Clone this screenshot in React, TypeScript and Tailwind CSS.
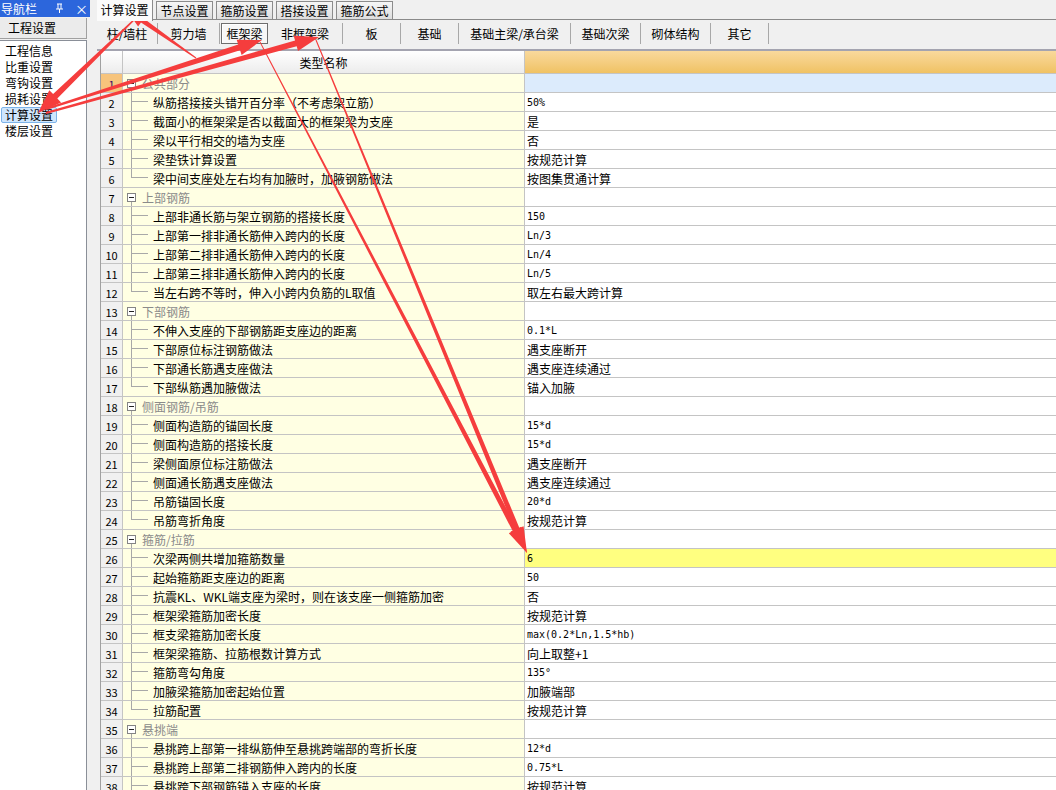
type Row = { name: string; value: string; kind: "g" | "c" | "l" };

const rows: Row[] = [
  { name: "公共部分", value: "", kind: "g" },
  { name: "纵筋搭接接头错开百分率（不考虑架立筋）", value: "50%", kind: "c" },
  { name: "截面小的框架梁是否以截面大的框架梁为支座", value: "是", kind: "c" },
  { name: "梁以平行相交的墙为支座", value: "否", kind: "c" },
  { name: "梁垫铁计算设置", value: "按规范计算", kind: "c" },
  { name: "梁中间支座处左右均有加腋时，加腋钢筋做法", value: "按图集贯通计算", kind: "l" },
  { name: "上部钢筋", value: "", kind: "g" },
  { name: "上部非通长筋与架立钢筋的搭接长度", value: "150", kind: "c" },
  { name: "上部第一排非通长筋伸入跨内的长度", value: "Ln/3", kind: "c" },
  { name: "上部第二排非通长筋伸入跨内的长度", value: "Ln/4", kind: "c" },
  { name: "上部第三排非通长筋伸入跨内的长度", value: "Ln/5", kind: "c" },
  { name: "当左右跨不等时，伸入小跨内负筋的L取值", value: "取左右最大跨计算", kind: "l" },
  { name: "下部钢筋", value: "", kind: "g" },
  { name: "不伸入支座的下部钢筋距支座边的距离", value: "0.1*L", kind: "c" },
  { name: "下部原位标注钢筋做法", value: "遇支座断开", kind: "c" },
  { name: "下部通长筋遇支座做法", value: "遇支座连续通过", kind: "c" },
  { name: "下部纵筋遇加腋做法", value: "锚入加腋", kind: "l" },
  { name: "侧面钢筋/吊筋", value: "", kind: "g" },
  { name: "侧面构造筋的锚固长度", value: "15*d", kind: "c" },
  { name: "侧面构造筋的搭接长度", value: "15*d", kind: "c" },
  { name: "梁侧面原位标注筋做法", value: "遇支座断开", kind: "c" },
  { name: "侧面通长筋遇支座做法", value: "遇支座连续通过", kind: "c" },
  { name: "吊筋锚固长度", value: "20*d", kind: "c" },
  { name: "吊筋弯折角度", value: "按规范计算", kind: "l" },
  { name: "箍筋/拉筋", value: "", kind: "g" },
  { name: "次梁两侧共增加箍筋数量", value: "6", kind: "c" },
  { name: "起始箍筋距支座边的距离", value: "50", kind: "c" },
  { name: "抗震KL、WKL端支座为梁时，则在该支座一侧箍筋加密", value: "否", kind: "c" },
  { name: "框架梁箍筋加密长度", value: "按规范计算", kind: "c" },
  { name: "框支梁箍筋加密长度", value: "max(0.2*Ln,1.5*hb)", kind: "c" },
  { name: "框架梁箍筋、拉筋根数计算方式", value: "向上取整+1", kind: "c" },
  { name: "箍筋弯勾角度", value: "135°", kind: "c" },
  { name: "加腋梁箍筋加密起始位置", value: "加腋端部", kind: "c" },
  { name: "拉筋配置", value: "按规范计算", kind: "l" },
  { name: "悬挑端", value: "", kind: "g" },
  { name: "悬挑跨上部第一排纵筋伸至悬挑跨端部的弯折长度", value: "12*d", kind: "c" },
  { name: "悬挑跨上部第二排钢筋伸入跨内的长度", value: "0.75*L", kind: "c" },
  { name: "悬挑跨下部钢筋锚入支座的长度", value: "按规范计算", kind: "c" },
];

const navItems = ["工程信息", "比重设置", "弯钩设置", "损耗设置", "计算设置", "楼层设置"];
const tabs = ["节点设置", "箍筋设置", "搭接设置", "箍筋公式"];
const subTabs: [string, string][] = [
  ["柱/墙柱", "w-[61px]"],
  ["剪力墙", "w-[62px]"],
  ["框架梁", "w-[48px]"],
  ["非框架梁", "w-[75px]"],
  ["板", "w-[58px]"],
  ["基础", "w-[58px]"],
  ["基础主梁/承台梁", "w-[112px]"],
  ["基础次梁", "w-[70px]"],
  ["砌体结构", "w-[70px]"],
  ["其它", "w-[58px]"],
];

const hasCjk = (s: string) => /[\u4e00-\u9fff]/.test(s);

// tapered arrow: thin at the tail, wide at the head
function arrow(x1: number, y1: number, x2: number, y2: number, w1: number, w2: number, hl: number, hw: number) {
  const dx = x2 - x1;
  const dy = y2 - y1;
  const len = Math.hypot(dx, dy);
  const ux = dx / len;
  const uy = dy / len;
  const nx = -uy;
  const ny = ux;
  const bx = x2 - ux * hl;
  const by = y2 - uy * hl;
  const p = [
    [x1 + (nx * w1) / 2, y1 + (ny * w1) / 2],
    [bx + (nx * w2) / 2, by + (ny * w2) / 2],
    [bx + (nx * hw) / 2, by + (ny * hw) / 2],
    [x2, y2],
    [bx - (nx * hw) / 2, by - (ny * hw) / 2],
    [bx - (nx * w2) / 2, by - (ny * w2) / 2],
    [x1 - (nx * w1) / 2, y1 - (ny * w1) / 2],
  ];
  return p.map((q) => q[0].toFixed(1) + "," + q[1].toFixed(1)).join(" ");
}

const TreeCell = ({ row }: { row: Row }) => {
  if (row.kind === "g") {
    return (
      <div className="flex h-full items-center pl-[4px]">
        <div className="flex h-full w-[9px] flex-col items-center">
          <div className="h-[5px]" />
          <div className="flex h-[9px] w-[9px] items-center justify-center border border-[#848484] bg-white">
            <div className="h-px w-[5px] bg-[#222]" />
          </div>
          <div className="w-px flex-1 bg-[#a8a8a8]" />
        </div>
        <span className="ml-[6px] translate-y-[1px] text-[#8a8a8a]">{row.name}</span>
      </div>
    );
  }
  return (
    <div className="flex h-full items-center pl-[8px]">
      <div className="flex h-full w-[17px] shrink-0 flex-col">
        <div className="h-1/2 border-b border-l border-[#a8a8a8]" />
        <div className={row.kind === "l" ? "h-1/2" : "h-1/2 border-l border-[#a8a8a8]"} />
      </div>
      <span className="translate-y-[1px] whitespace-nowrap pl-[5px] text-black">{row.name}</span>
    </div>
  );
};

export default function App() {
  return (
    <div className="relative flex h-[790px] w-[1056px] overflow-hidden bg-[#f0f0f0] font-['Noto_Sans_CJK_SC',sans-serif] text-[12px] text-black">
      {/* navigation panel */}
      <div className="flex w-[97px] shrink-0 flex-col">
        <div className="flex h-[17px] w-[90px] shrink-0 items-center bg-[#2c66dc] text-white">
          <span className="ml-[1px] leading-none">导航栏</span>
          <svg width="9" height="11" viewBox="0 0 9 11" className="ml-[18px]">
            <path d="M2 1h5M3 1v5M6 1v5M1 6h7M4.5 6v4" stroke="white" strokeWidth="1" fill="none" />
          </svg>
          <span className="ml-[11px] text-[13px] leading-none">×</span>
        </div>
        <div className="mt-[1px] flex h-[21px] w-[87px] shrink-0 items-center border-b border-r border-[#a0a0a0] bg-[#ebebeb] pl-[8px]">
          工程设置
        </div>
        <div className="mt-[1px] flex w-[87px] flex-1 flex-col border-r border-t border-[#8a8f98] bg-white pt-[2px]">
          {navItems.map((t) => (
            <div key={t} className="flex h-[16px] shrink-0 items-center">
              <span
                className={
                  t === "计算设置"
                    ? "ml-[1px] flex h-[16px] w-[56px] items-center rounded-[2px] border border-[#7db3e8] bg-[#cfe6fd] pl-[3px]"
                    : "pl-[5px]"
                }
              >
                {t}
              </span>
            </div>
          ))}
        </div>
      </div>

      {/* main */}
      <div className="flex min-w-0 flex-1 flex-col">
        <div className="flex h-[20px] shrink-0 items-end">
          <div className="z-10 flex h-[21px] w-[56px] items-center justify-center self-start border-r border-[#8c8c8c] bg-[#fbfbfb] pb-[1px]">
            计算设置
          </div>
          <div className="flex h-[20px] flex-1 items-end border-b border-[#8a8a8a]">
            {tabs.map((t) => (
              <div
                key={t}
                className="ml-[3px] flex h-[18px] w-[57px] items-center justify-center border border-b-0 border-[#8c8c8c] bg-gradient-to-b from-[#f6f6f6] to-[#dedede]"
              >
                {t}
              </div>
            ))}
          </div>
        </div>

        <div className="flex h-[31px] shrink-0 items-start border-b-2 border-[#a4a4b0] pt-[3px]">
          {subTabs.map(([t, w]) =>
            t === "框架梁" ? (
              <div key={t} className={`${w} flex h-[21px] items-center pl-[1px]`}>
                <div className="flex h-full flex-1 items-center justify-center border border-[#6e6e6e] bg-[#f7f7f7] shadow-[inset_1px_1px_0_#ffffff]">
                  {t}
                </div>
              </div>
            ) : (
              <div key={t} className={`${w} flex h-[21px] items-center justify-center border-r border-[#a8a8a8]`}>
                {t}
              </div>
            )
          )}
        </div>

        <div className="flex min-h-0 flex-1 flex-col pl-[3px]">
          <div className="flex min-h-0 flex-1 flex-col border-l border-[#a0a0a0] bg-white">
            <div className="flex h-[23px] shrink-0 border-b border-[#c4c4c4]">
              <div className="w-[22px] border-r border-[#c4c4c4] bg-gradient-to-b from-white to-[#ececec]" />
              <div className="flex w-[401px] items-center justify-center bg-gradient-to-b from-white to-[#ececec]">
                <span className="translate-y-[1px]">类型名称</span>
              </div>
              <div className="flex-1 border-l border-[#c4c4c4] bg-gradient-to-b from-[#f9d99c] to-[#f0c263]" />
            </div>
            {rows.map((r, i) => {
              const valueBg = i === 0 ? "bg-[#dcebfc]" : i === 25 ? "bg-[#ffff80]" : "bg-white";
              return (
                <div key={i} className="flex h-[19px] shrink-0 border-b border-[#c4c4c4] leading-[18px]">
                  <div
                    className={`flex w-[22px] items-center justify-center border-r border-[#c4c4c4] text-[11px] ${
                      i === 0 ? "bg-[#f7c47c] text-[#3a0a6a]" : "bg-[#f0f0f0]"
                    }`}
                  >
                    <span className="translate-y-[1px]">{i + 1}</span>
                  </div>
                  <div className="w-[401px] overflow-hidden bg-[#ffffe3]">
                    <TreeCell row={r} />
                  </div>
                  <div className={`flex flex-1 items-center border-l border-[#c4c4c4] pl-[2px] ${valueBg}`}>
                    <span
                      className={
                        hasCjk(r.value)
                          ? "translate-y-[1px] whitespace-nowrap"
                          : "translate-y-[1px] whitespace-nowrap font-['DejaVu_Sans_Mono','Noto_Sans_CJK_SC',monospace] text-[10px]"
                      }
                    >
                      {r.value}
                    </span>
                  </div>
                </div>
              );
            })}
          </div>
        </div>
      </div>

      {/* red annotation arrows */}
      <svg className="pointer-events-none absolute inset-0" width="1056" height="790" viewBox="0 0 1056 790">
        <g fill="#f53d3d">
          <polygon points={arrow(196, 58, 126, 9, 1, 5, 20, 15)} />
          <polygon points={arrow(140, 14, 38, 113, 1, 6, 24, 17)} />
          <polygon points={arrow(46, 109, 262, 40, 2, 6, 24, 16)} />
          <polygon points={arrow(46, 113, 319, 37, 2, 6, 24, 16)} />
          <polygon points={arrow(260, 42, 527, 553, 1, 5, 26, 14)} />
          <polygon points={arrow(316, 40, 527, 553, 1, 5, 26, 14)} />
        </g>
      </svg>
    </div>
  );
}
